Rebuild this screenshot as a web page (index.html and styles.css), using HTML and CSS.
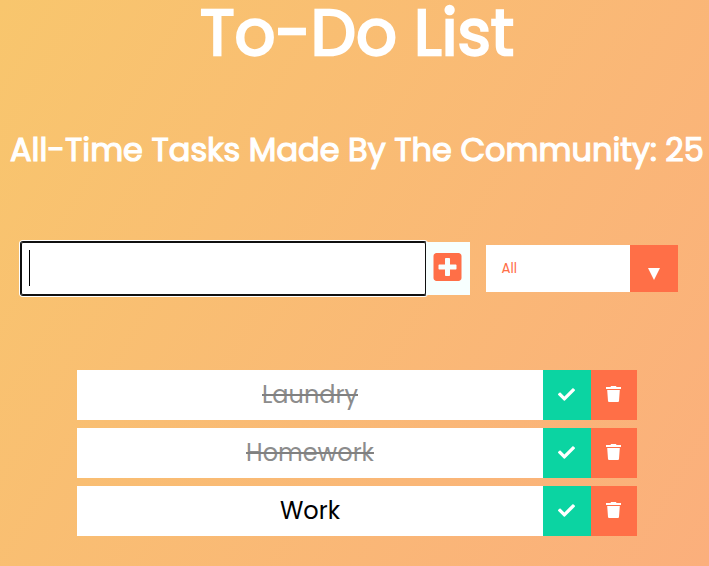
FILE: index.html
```html
<!DOCTYPE html>
<html lang="en">
<head>
<meta charset="utf-8">
<title>To-Do List</title>
<link rel="stylesheet" href="styles.css">
</head>
<body>
<svg class="sprite" aria-hidden="true">
  <symbol id="check" viewBox="0 0 512 512"><path d="M173.9 439.4L7.5 273c-10-10-10-26.200 0-36.200l36.200-36.200c10-10 26.200-10 36.200 0L192 312.700 432.100 72.600c10-10 26.200-10 36.200 0l36.200 36.200c10 10 10 26.200 0 36.200L210.100 439.400c-10 10-26.200 10-36.200 0z"/></symbol>
  <symbol id="trash" viewBox="0 0 15 16"><path d="M5 0h5l.5 1H15v2H0V1h4.500zM1.200 4h12.600l-.8 11q-.1 1-1.100 1H3.100q-1 0-1.100-1z"/></symbol>
</svg>
<header><h1>To-Do List</h1></header>
<h2>All-Time Tasks Made By The Community: 25</h2>
<form>
  <div class="todo-input"><span class="caret"></span></div>
  <div class="add"><svg viewBox="0 0 448 448"><path d="M400 0H48C21.500 0 0 21.500 0 48v352c0 26.500 21.500 48 48 48h352c26.500 0 48-21.500 48-48V48c0-26.500-21.500-48-48-48zM368 252c0 6.600-5.400 12-12 12h-92v92c0 6.600-5.400 12-12 12h-56c-6.600 0-12-5.400-12-12v-92H92c-6.600 0-12-5.400-12-12v-56c0-6.600 5.400-12 12-12h92V92c0-6.600 5.400-12 12-12h56c6.600 0 12 5.400 12 12v92h92c6.600 0 12 5.400 12 12z"/></svg></div>
  <div class="filter"><span class="value">All</span><span class="arrow"><svg viewBox="0 0 12 12"><path d="M0 0h12L6 12z"/></svg></span></div>
</form>
<ul>
  <li><span class="task done">Laundry</span><span class="complete"><svg><use href="#check"/></svg></span><span class="trash"><svg><use href="#trash"/></svg></span></li>
  <li><span class="task done">Homework</span><span class="complete"><svg><use href="#check"/></svg></span><span class="trash"><svg><use href="#trash"/></svg></span></li>
  <li><span class="task">Work</span><span class="complete"><svg><use href="#check"/></svg></span><span class="trash"><svg><use href="#trash"/></svg></span></li>
</ul>
</body>
</html>
```
FILE: styles.css
```css
* { box-sizing: border-box; margin: 0; padding: 0; }
body {
  width: 709px;
  height: 566px;
  overflow: hidden;
  background: linear-gradient(120deg, #f8c66d, #fbaf7c);
  font-family: Poppins, Inter, sans-serif;
  color: #fff;
}
.sprite { display: none; }
svg { display: block; fill: currentColor; }
h1 {
  height: 66px;
  padding-left: 5px;
  text-align: center;
  font-size: 64px;
  line-height: 66px;
  font-weight: 400;
  -webkit-text-stroke: 2.4px #fff;
  white-space: nowrap;
}
h2 {
  height: 40px;
  margin-top: 64px;
  padding-left: 10px;
  font-size: 32px;
  line-height: 40px;
  font-weight: 400;
  -webkit-text-stroke: 1.2px #fff;
  white-space: nowrap;
}
form { display: flex; align-items: center; margin: 72px 0 0 21px; height: 53px; }
.todo-input {
  width: 405px;
  height: 53px;
  padding: 8px;
  background: #fff;
  border-radius: 2px;
  box-shadow: inset 0 0 0 1px #101010, 0 0 0 1px #101010, 0 0 0 2px #fff;
}
.caret { display: block; width: 1px; height: 36px; background: #000; }
.add {
  position: relative;
  width: 44px;
  height: 53px;
  padding: 11px 0 0 7px;
  background: #f7fffe;
  color: #ff6f47;
}
.add svg { width: 29px; height: 28px; }
.filter { display: flex; width: 192px; height: 47px; margin-left: 16px; background: #fff; }
.value { width: 144px; padding-left: 15.500px; line-height: 47px; font-size: 13.330px; color: #ff6f47; }
.arrow { width: 48px; padding: 23px 0 0 18px; background: #ff6f47; }
.arrow svg { width: 12px; height: 12px; }
ul { display: flex; flex-direction: column; gap: 8px; width: 560px; margin: 75px 0 0 77px; list-style: none; }
li { display: flex; height: 50px; }
.task {
  width: 466px;
  height: 50px;
  background: #fff;
  color: #000;
  text-align: center;
  font-size: 24px;
  line-height: 50px;
}
.done {
  color: #8c8c8c;
  text-decoration: line-through 2px #808080;
}
.complete, .trash { display: flex; justify-content: center; }
.complete { width: 48px; padding: 16px 1px 0 0; background: #0bd4a2; }
.trash { width: 46px; padding: 16px 1px 0 0; background: #ff6f47; }
.complete svg { width: 17px; height: 17px; }
.trash svg { width: 15px; height: 16px; }
```
